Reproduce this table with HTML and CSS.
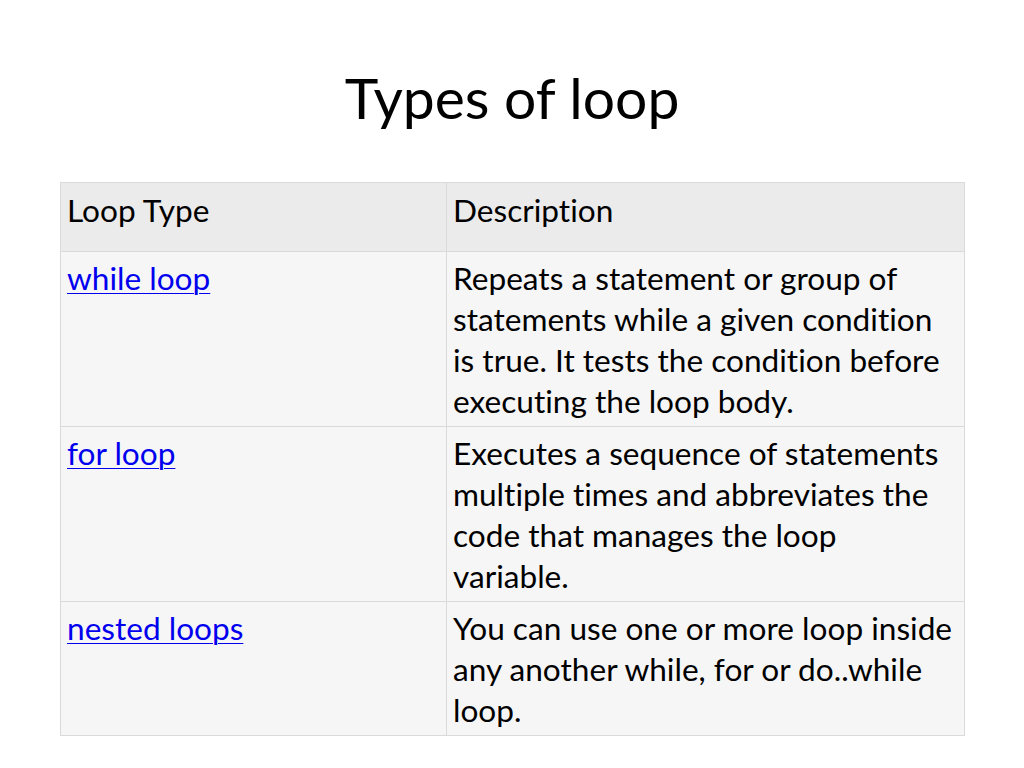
FILE: index.html
```html
<!DOCTYPE html>
<html>
<head>
<meta charset="utf-8">
<title>Types of loop</title>
<link rel="stylesheet" href="styles.css">
</head>
<body>
<div class="slide">
  <h1 class="title">Types of loop</h1>
  <table class="loops">
    <thead>
      <tr><th class="c1">Loop Type</th><th class="c2">Description</th></tr>
    </thead>
    <tbody>
      <tr>
        <td class="c1"><a href="#">while loop</a></td>
        <td class="c2">Repeats a statement or group of<br>statements while a given condition<br>is true. It tests the condition before<br>executing the loop body.</td>
      </tr>
      <tr>
        <td class="c1"><a href="#">for loop</a></td>
        <td class="c2">Executes a sequence of statements<br>multiple times and abbreviates the<br>code that manages the loop<br>variable.</td>
      </tr>
      <tr>
        <td class="c1"><a href="#">nested loops</a></td>
        <td class="c2">You can use one or more loop inside<br>any another while, for or do..while<br>loop.</td>
      </tr>
    </tbody>
  </table>
</div>
</body>
</html>
```
FILE: styles.css
```css
html, body {
  margin: 0;
  padding: 0;
  background: #ffffff;
}
.slide {
  width: 1024px;
  height: 768px;
  box-sizing: border-box;
  padding-top: 60px;
  font-family: Lato, "Open Sans", sans-serif;
  font-variant-ligatures: none;
  color: #000;
}
.title {
  margin: 0;
  font-weight: 400;
  font-size: 57px;
  line-height: 74px;
  text-align: center;
}
.loops {
  margin: 48px 0 0 60px;
  width: 905px;
  border-collapse: collapse;
  table-layout: fixed;
  font-size: 31.6px;
  line-height: 41px;
}
.loops th, .loops td {
  border: 1px solid #dadada;
  padding: 6px 6px 4px 6px;
  vertical-align: top;
  text-align: left;
  font-weight: 400;
}
.loops .c1 { width: 373px; }
.loops thead th {
  background: #ebebeb;
  height: 57px;
  padding-top: 7px;
  padding-bottom: 4px;
}
.loops tbody td {
  background: #f6f6f6;
}
.loops a {
  color: #0000ee;
  text-decoration: underline;
  text-underline-offset: 3px;
  text-decoration-thickness: 1px;
}
```
